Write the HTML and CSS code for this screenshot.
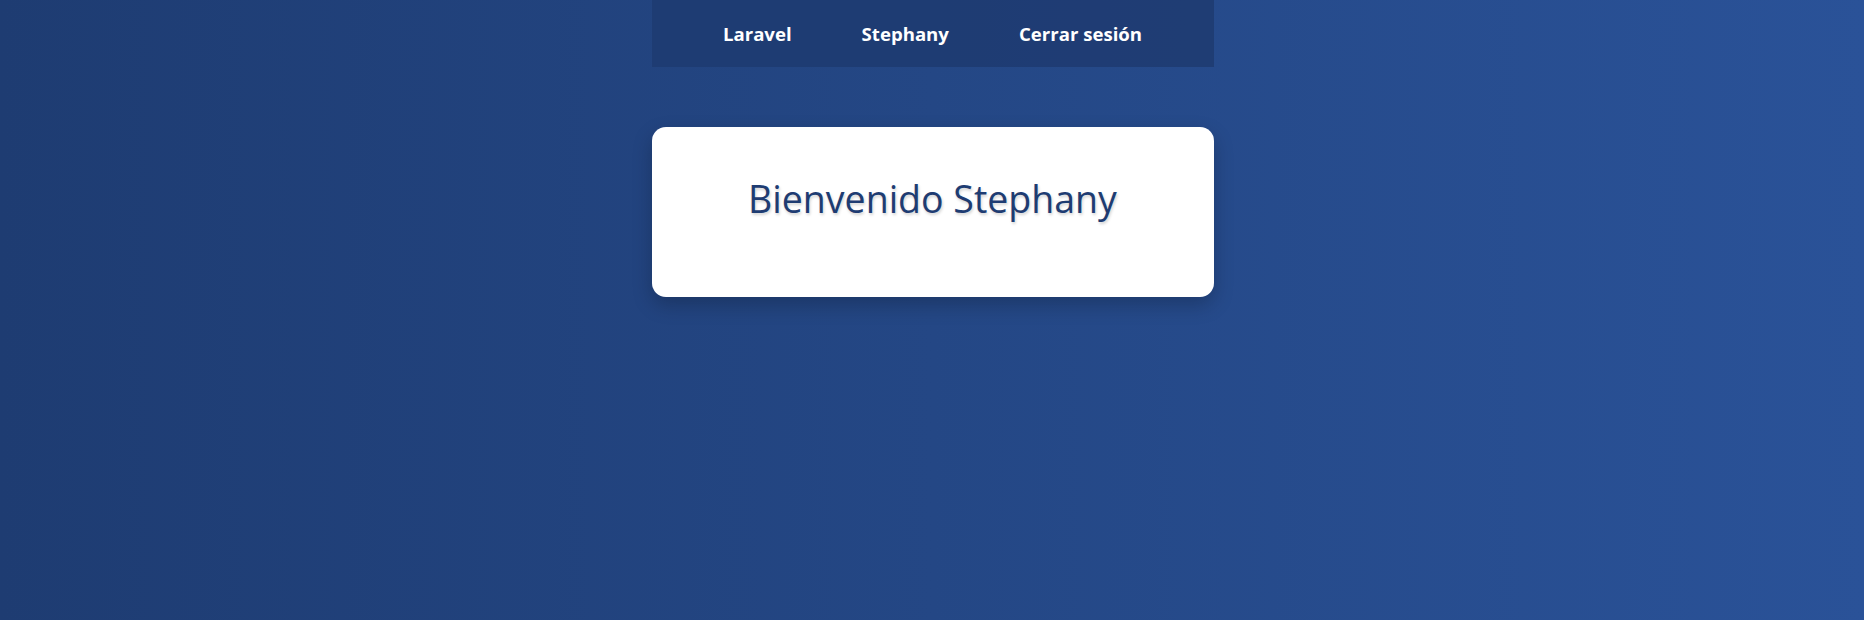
FILE: index.html
```html
<!DOCTYPE html>
<html lang="es">
<head>
<meta charset="utf-8">
<title>Inicio</title>
<link rel="stylesheet" href="styles.css">
</head>
<body>
<div class="page">
  <nav class="nav">
    <a class="nav-link" href="#">Laravel</a>
    <a class="nav-link" href="#">Stephany</a>
    <a class="nav-link" href="#">Cerrar sesión</a>
  </nav>
  <main class="card">
    <h1 class="card-title">Bienvenido Stephany</h1>
  </main>
</div>
</body>
</html>
```

FILE: styles.css
```css
html, body {
  margin: 0;
  padding: 0;
  height: 100%;
}
body {
  background: linear-gradient(to right, #1e3c72, #2a5298);
  font-family: "Open Sans", "Noto Sans", sans-serif;
  min-height: 620px;
}
.page {
  width: 562px;
  margin: 0 auto;
  padding-left: 1px;
}
.nav {
  height: 67px;
  background: rgba(30, 60, 114, 0.92);
  display: flex;
  justify-content: center;
  align-items: center;
  gap: 70px;
  box-sizing: border-box;
}
.nav-link {
  color: #ffffff;
  font-weight: 700;
  font-size: 18.6px;
  text-decoration: none;
}
.card {
  margin-top: 60px;
  height: 170px;
  box-sizing: border-box;
  background: #ffffff;
  border-radius: 14px;
  box-shadow: 0 8px 20px rgba(0, 0, 0, 0.22);
  padding-top: 46px;
}
.card-title {
  margin: 0;
  text-align: center;
  font-weight: 400;
  font-size: 37.5px;
  line-height: 52px;
  color: #1e3c72;
  text-shadow: 1px 2px 3px rgba(0, 0, 0, 0.18);
}
```
